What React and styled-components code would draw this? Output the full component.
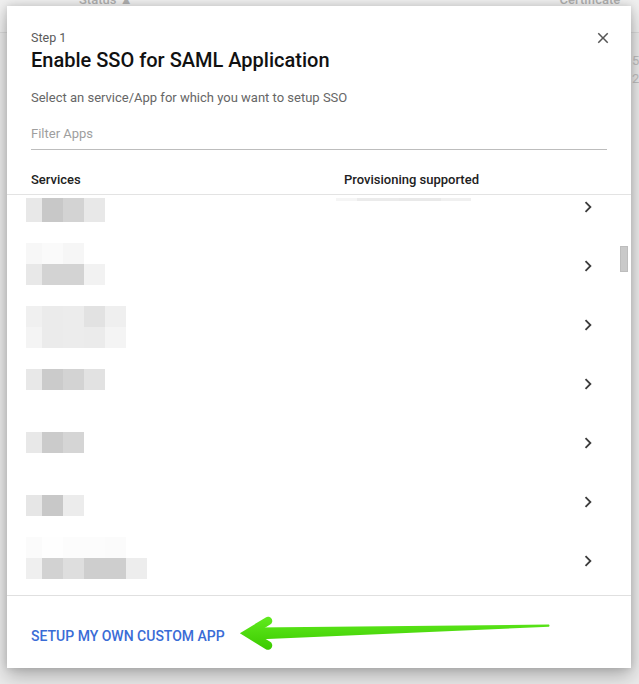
import React, { useLayoutEffect, useRef, useState } from "react";
import styled, { createGlobalStyle } from "styled-components";

const Global = createGlobalStyle`
  html, body { margin: 0; padding: 0; }
  body { font-family: Roboto, "Noto Sans", Arial, sans-serif; }
  * { box-sizing: border-box; }
`;

const Page = styled.div`
  position: relative;
  width: 639px;
  height: 684px;
  overflow: hidden;
  background: #ebebeb;
`;

const BgHeader = styled.div`
  display: flex;
  height: 33px;
  border-bottom: 1px solid #dcdcdc;
  background: #efefef;
  padding-left: 79px;
  color: #aeaeae;
  font-size: 13px;
  font-weight: 500;
`;

const BgHeadCell = styled.div`
  width: ${(p) => p.$w}px;
  line-height: 16px;
  margin-top: -8px;
`;

const BgRows = styled.div`
  display: flex;
  flex-direction: column;
  gap: 2px;
  padding: 20px 0 0 632px;
  color: #c0c0c0;
  font-size: 13px;
  line-height: 16px;
`;

const Dialog = styled.div`
  position: absolute;
  left: 7px;
  top: 6px;
  width: 624px;
  height: 662px;
  background: #fff;
  display: flex;
  flex-direction: column;
  box-shadow: 0 8px 18px rgba(0, 0, 0, 0.26), 0 0 8px rgba(0, 0, 0, 0.14);
`;

const Head = styled.div`
  position: relative;
  padding: 24px 24px 0 24px;
  display: flex;
  flex-direction: column;
`;

const Step = styled.div`
  font-size: 12.5px;
  line-height: 16px;
  color: #5a5a5a;
`;

const Title = styled.h1`
  margin: 0;
  font-size: 20px;
  line-height: 28px;
  font-weight: 500;
  color: #111;
`;

const Sub = styled.p`
  margin: 14px 0 0 0;
  font-size: 13px;
  line-height: 20px;
  color: #666;
`;

const Filter = styled.input`
  margin-top: 15px;
  border: none;
  border-bottom: 1px solid #bdbdbd;
  outline: none;
  padding: 0 0 6px 0;
  font-family: Roboto, Arial, sans-serif;
  font-size: 13px;
  line-height: 20px;
  height: 27px;
  width: 576px;
  color: #333;
  &::placeholder { color: #9e9e9e; }
`;

const CloseBtn = styled.button`
  position: absolute;
  right: 19px;
  top: 23px;
  width: 18px;
  height: 18px;
  padding: 0;
  border: none;
  background: none;
  display: flex;
  color: #555;
`;

const ColHeader = styled.div`
  margin-top: 20px;
  display: grid;
  grid-template-columns: 313px 1fr;
  padding: 0 24px 4px 24px;
  border-bottom: 1px solid #e3e3e3;
  font-size: 13px;
  line-height: 20px;
  font-weight: 500;
  color: #212121;
`;

const ListWrap = styled.div`
  position: relative;
  height: 400px;
`;

const List = styled.div`
  height: 400px;
  overflow-y: scroll;
  padding-right: 11px;
  scrollbar-width: none;
  &::-webkit-scrollbar { display: none; }
`;

const Thumb = styled.div`
  position: absolute;
  right: 3px;
  width: 8px;
  height: 26px;
  background: #c9c9c9;
  border: 1px solid #bdbdbd;
`;

const Row = styled.div`
  display: grid;
  grid-template-columns: 310px 1fr 22px;
  align-items: center;
  height: 59px;
  padding: 0 21px 0 19px;
`;

const Cell = styled.div`
  height: 59px;
  display: flex;
`;

const Chevron = styled.svg`
  width: 22px;
  height: 22px;
  color: #3c3c3c;
`;

const Footer = styled.div`
  position: relative;
  border-top: 1px solid #e0e0e0;
  height: 73px;
  padding: 30px 24px 0 24px;
`;

const CustomLink = styled.a`
  font-size: 14px;
  line-height: 20px;
  font-weight: 500;
  letter-spacing: 0;
  color: #3a6cd6;
  text-transform: uppercase;
  text-decoration: none;
  cursor: pointer;
`;

const ArrowSvg = styled.svg`
  position: absolute;
  left: 0;
  top: -1px;
  pointer-events: none;
`;

const VISIBLE = [
  {
    lines: [{ y: 21, h: 24, cells: ["#e8e8e8", "#c8c8c8", "#d3d3d3", "#e8e8e8"] }],
    prov: true,
  },
  {
    lines: [
      { y: 7, cells: ["#f7f7f7", "#fafafa", "#f6f6f6"] },
      { y: 28, cells: ["#e8e8e8", "#d3d3d3", "#d3d3d3", "#f2f2f2"] },
    ],
  },
  {
    lines: [
      { y: 11, cells: ["#f0f0f0", "#ebebeb", "#ececec", "#e2e2e2", "#efefef"] },
      { y: 32, cells: ["#f4f4f4", "#ebebeb", "#ececec", "#ebebeb", "#f4f4f4"] },
    ],
  },
  { lines: [{ y: 15, cells: ["#e8e8e8", "#cbcbcb", "#d3d3d3", "#e2e2e2"] }] },
  { lines: [{ y: 19, cells: ["#e8e8e8", "#cbcbcb", "#d5d5d5"] }] },
  { lines: [{ y: 23, cells: ["#e6e6e6", "#c8c8c8", "#ececec"] }] },
  {
    lines: [
      { y: 6, cells: ["#fbfbfb", "#fefefe", "#fcfcfc", "#fcfcfc", "#fbfbfb"] },
      { y: 27, cells: ["#efefef", "#d2d2d2", "#dedede", "#cecece", "#cecece", "#ededed"] },
    ],
  },
];

const TOTAL = 104;
const FIRST = 13;
const SCROLL = 785;
const rows = Array.from({ length: TOTAL }, (_, i) => {
  const idx = ((i - FIRST) % 7 + 7) % 7;
  const base = VISIBLE[idx];
  if (i >= FIRST && i < FIRST + 7) return base;
  return { lines: base.lines.map((l) => ({ ...l, y: 16 })).slice(0, 1) };
});

function Mosaic({ lines }) {
  return (
    <svg width="150" height="59" viewBox="0 0 150 59">
      {lines.map((l, li) =>
        l.cells.map((c, ci) => (
          <rect
            key={li + "-" + ci}
            x={ci === 0 ? 0 : 16 + (ci - 1) * 21}
            y={l.y}
            width={ci === 0 ? 16 : 21}
            height={l.h || 21}
            fill={c}
          />
        ))
      )}
    </svg>
  );
}

function ProvBand() {
  const cells = [
    [0, 21, "#f5f5f5"],
    [21, 42, "#ebebeb"],
    [63, 42, "#e9e9e9"],
    [105, 30, "#f0f0f0"],
  ];
  return (
    <svg width="140" height="59" viewBox="0 0 140 59">
      {cells.map(([x, w, c]) => (
        <rect key={x} x={x} y={21} width={w} height={3} fill={c} />
      ))}
    </svg>
  );
}

function ChevronIcon() {
  return (
    <Chevron viewBox="0 0 24 24">
      <path fill="currentColor" d="M10 6L8.59 7.41 13.17 12l-4.58 4.59L10 18l6-6z" />
    </Chevron>
  );
}

export default function App() {
  const listRef = useRef(null);
  const [thumbTop, setThumbTop] = useState(50);

  const update = () => {
    const el = listRef.current;
    if (!el) return;
    const max = el.scrollHeight - el.clientHeight;
    const t = max > 0 ? (el.scrollTop / max) * (el.clientHeight - 26) : 0;
    setThumbTop(t);
  };

  useLayoutEffect(() => {
    if (listRef.current) listRef.current.scrollTop = SCROLL;
    update();
  }, []);

  return (
    <Page>
      <Global />
      <BgHeader>
        <BgHeadCell $w={484}>Status ▲</BgHeadCell>
        <BgHeadCell $w={80}>Certificate</BgHeadCell>
      </BgHeader>
      <BgRows>
        <span>5</span>
        <span>2</span>
      </BgRows>

      <Dialog>
        <Head>
          <Step>Step 1</Step>
          <Title>Enable SSO for SAML Application</Title>
          <Sub>Select an service/App for which you want to setup SSO</Sub>
          <Filter placeholder="Filter Apps" />
          <CloseBtn aria-label="Close">
            <svg width="18" height="18" viewBox="0 0 24 24">
              <path
                fill="currentColor"
                d="M19 6.41L17.59 5 12 10.59 6.41 5 5 6.41 10.59 12 5 17.59 6.41 19 12 13.41 17.59 19 19 17.59 13.41 12z"
              />
            </svg>
          </CloseBtn>
        </Head>
        <ColHeader>
          <span>Services</span>
          <span>Provisioning supported</span>
        </ColHeader>
        <ListWrap>
          <List ref={listRef} onScroll={update}>
            {rows.map((r, i) => (
              <Row key={i}>
                <Cell>
                  <Mosaic lines={r.lines} />
                </Cell>
                <Cell>{r.prov ? <ProvBand /> : null}</Cell>
                <ChevronIcon />
              </Row>
            ))}
          </List>
          <Thumb style={{ top: thumbTop }} />
        </ListWrap>
        <Footer>
          <CustomLink>Setup my own custom app</CustomLink>
          <ArrowSvg width="624" height="73" viewBox="7 595 624 73">
            <defs>
              <linearGradient id="g" x1="0" y1="619" x2="0" y2="649" gradientUnits="userSpaceOnUse">
                <stop offset="0" stopColor="#5ee81c" />
                <stop offset="1" stopColor="#3ccb00" />
              </linearGradient>
            </defs>
            <path d="M256 627.5 L549 624.6 L549.6 625.7 L549 626.8 L256 639.5 Z" fill="url(#g)" />
            <polyline
              points="268,621 248,633.3 268,645.5"
              fill="none"
              stroke="url(#g)"
              strokeWidth="8.5"
              strokeLinecap="round"
              strokeLinejoin="miter"
            />
          </ArrowSvg>
        </Footer>
      </Dialog>
    </Page>
  );
}
